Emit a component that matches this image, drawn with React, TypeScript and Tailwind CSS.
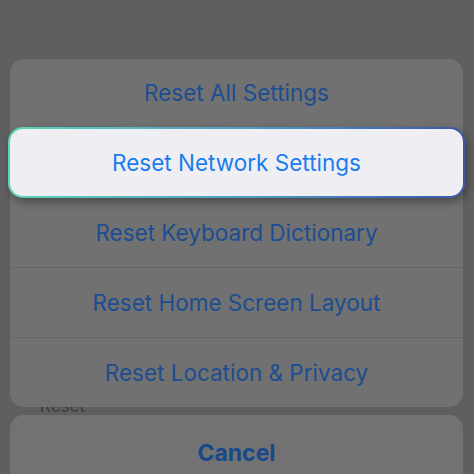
const rows = [
  "Reset Keyboard Dictionary",
  "Reset Home Screen Layout",
  "Reset Location & Privacy",
];

export default function App() {
  return (
    <div
      className="w-[474px] h-[474px] overflow-hidden bg-[#5f5f60] pt-[59px] pl-[10px] pr-[11px]"
      style={{ fontFamily: "Inter, 'Liberation Sans', sans-serif" }}
    >
      <div className="relative z-10 rounded-[14px] bg-[#727272]/95">
        <div className="h-[68px] flex items-center justify-center text-[22.5px] text-[#1c4d90]">
          Reset All Settings
        </div>

        <div className="-mx-[2px] rounded-[15px] p-[2px] bg-gradient-to-r from-[#5ed3b6] via-[#4f9fc4] to-[#3d55ab] shadow-[2px_4px_8px_rgba(0,0,0,0.35)]">
          <div className="h-[67px] rounded-[13px] bg-[#efeff3] flex items-center justify-center text-[22.5px] text-[#1a7cee]">
            Reset Network Settings
          </div>
        </div>

        {rows.map((label, i) => (
          <div
            key={label}
            className={
              "flex items-center justify-center text-[22.5px] text-[#1c4d90] " +
              (i === 0 ? "h-[69px]" : "h-[70px] border-t border-[#656565]")
            }
          >
            {label}
          </div>
        ))}
      </div>

      <div className="h-[8px] flow-root">
        <div className="-mt-[10px] pl-[30px] text-[17px] leading-[18px] text-[#3a3a3a] blur-[0.5px]">
          Reset
        </div>
      </div>

      <div className="relative z-10 h-[80px] rounded-[14px] bg-[#727272] flex items-start justify-center pt-[21px]">
        <span className="text-[23px] font-bold text-[#17488b]">Cancel</span>
      </div>
    </div>
  );
}
